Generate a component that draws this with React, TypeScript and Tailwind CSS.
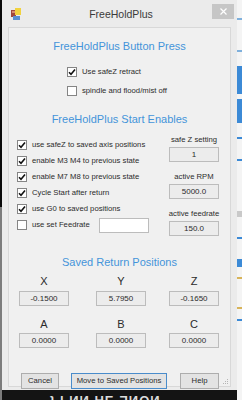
import React from 'react';

const font = { fontFamily: '"Liberation Sans", Arial, sans-serif' };

const Check: React.FC<{ on?: boolean }> = ({ on }) => (
  <div className="w-[10px] h-[10px] shrink-0 border border-[#858585] bg-white flex items-center justify-center">
    {on && (
      <svg width="8" height="8" viewBox="0 0 8 8">
        <path d="M1 4.2 L3 6.2 L7 1.5" stroke="#111" strokeWidth="1.6" fill="none" />
      </svg>
    )}
  </div>
);

const Row: React.FC<{ on?: boolean; label: string; children?: React.ReactNode }> = ({ on, label, children }) => (
  <div className="h-[16px] flex items-center">
    <Check on={on} />
    <span className="ml-[5px] text-[7.7px] text-[#2b2b2b] whitespace-nowrap">{label}</span>
    {children}
  </div>
);

const Box: React.FC<{ value: string; white?: boolean }> = ({ value, white }) => (
  <div
    className={`w-[50px] h-[15px] border border-[#bcbcbc] flex items-center justify-center text-[8px] text-[#2b2b2b] ${
      white ? 'bg-white' : 'bg-[#ececec]'
    }`}
  >
    {value}
  </div>
);

const Heading: React.FC<{ text: string; className?: string }> = ({ text, className }) => (
  <div className={`h-[14px] leading-[14px] text-center text-[11px] text-[#4494da] ${className}`}>{text}</div>
);

const Axis: React.FC<{ name: string; value: string; className?: string; gap: string }> = ({ name, value, className, gap }) => (
  <div className={`flex flex-col items-center w-[50px] ${className}`}>
    <div className="h-[14px] leading-[14px] text-[11px] text-[#2b2b2b]">{name}</div>
    <div className={gap}>
      <Box value={value} />
    </div>
  </div>
);

const Btn: React.FC<{ label: string; w: string; primary?: boolean; className?: string }> = ({ label, w, primary, className }) => (
  <div
    className={`${w} h-[16px] flex items-center justify-center text-[7.7px] text-[#2b2b2b] bg-[#e3e3e3] border ${
      primary ? 'border-[#4a8ccb]' : 'border-[#adadad]'
    } ${className}`}
  >
    {label}
  </div>
);

export default function App() {
  return (
    <div className="w-[242px] h-[400px] overflow-hidden flex bg-[#141414]" style={font}>
      {/* left edge of the desktop */}
      <div className="w-[2px] flex flex-col">
        <div className="h-[207px] bg-[#0a0a0a]" />
        <div className="flex-1 bg-[#7c7c7c]" />
      </div>

      <div className="w-[235px] flex flex-col">
        {/* dialog window */}
        <div className="h-[390px] bg-[#ebebeb] flex flex-col">
          <div className="h-[27px] flex items-start relative">
            <svg className="absolute left-[9px] top-[8px]" width="10" height="12" viewBox="0 0 10 12">
              <rect x="0" y="2" width="5" height="7" fill="#a0473b" />
              <rect x="1" y="3" width="3" height="2" fill="#d98a6e" />
              <rect x="4" y="0" width="6" height="7" fill="#f1d23e" />
              <rect x="2" y="8" width="7" height="4" fill="#5b8fd0" />
            </svg>
            <div className="w-full text-center text-[10.5px] text-[#3a3a3a] mt-[7px] leading-[14px] pl-[3px]">FreeHoldPlus</div>
            <div className="absolute right-[3px] top-[4px] w-[22px] h-[15px] bg-[#c6c6c6] flex items-center justify-center">
              <svg width="7" height="7" viewBox="0 0 7 7">
                <path d="M0.5 0.5 L6.5 6.5 M6.5 0.5 L0.5 6.5" stroke="#fff" strokeWidth="1.2" />
              </svg>
            </div>
          </div>

          {/* client area */}
          <div className="mx-[6px] h-[360px] bg-[#f0f0f0] border border-[#d8d8d8] flex flex-col relative">
            <Heading text="FreeHoldPlus Button Press" className="mt-[11px]" />
            <div className="mt-[11px] pl-[58px] flex flex-col gap-[3px]">
              <Row on label="Use safeZ retract" />
              <Row label="spindle and flood/mist off" />
            </div>

            <Heading text="FreeHoldPlus Start Enables" className="mt-[13px]" />
            <div className="mt-[8px] flex justify-between">
              <div className="pl-[8px] pt-[3px] flex flex-col">
                <Row on label="use safeZ to saved axis positions" />
                <Row on label="enable M3 M4 to previous state" />
                <Row on label="enable M7 M8 to previous state" />
                <Row on label="Cycle Start after return" />
                <Row on label="use G0 to saved positions" />
                <Row label="use set Feedrate">
                  <div className="ml-[9px]">
                    <Box value="" white />
                  </div>
                </Row>
              </div>
              <div className="mr-[11px] flex flex-col items-center w-[50px] text-[7.7px] text-[#2b2b2b]">
                <div className="h-[12px] leading-[12px] whitespace-nowrap">safe Z setting</div>
                <div className="mt-[1px]">
                  <Box value="1" />
                </div>
                <div className="mt-[9px] h-[12px] leading-[12px] whitespace-nowrap">active RPM</div>
                <div className="mt-[1px]">
                  <Box value="5000.0" />
                </div>
                <div className="mt-[9px] h-[12px] leading-[12px] whitespace-nowrap">active feedrate</div>
                <div className="mt-[1px]">
                  <Box value="150.0" />
                </div>
              </div>
            </div>

            <Heading text="Saved Return Positions" className="mt-[19px]" />
            <div className="mt-[5px] pl-[10px] flex">
              <Axis name="X" value="-0.1500" gap="mt-[3px]" />
              <Axis name="Y" value="5.7950" gap="mt-[3px]" className="ml-[27px]" />
              <Axis name="Z" value="-0.1650" gap="mt-[3px]" className="ml-[23px]" />
            </div>
            <div className="mt-[11px] pl-[10px] flex">
              <Axis name="A" value="0.0000" gap="mt-[2px]" />
              <Axis name="B" value="0.0000" gap="mt-[2px]" className="ml-[27px]" />
              <Axis name="C" value="0.0000" gap="mt-[2px]" className="ml-[23px]" />
            </div>

            <div className="mt-[25px] pl-[12px] flex">
              <Btn label="Cancel" w="w-[38px]" />
              <Btn label="Move to Saved Positions" w="w-[96px]" primary className="ml-[12px]" />
              <Btn label="Help" w="w-[39px]" className="ml-[13px]" />
            </div>

            {/* size grip */}
            <svg className="absolute right-[1px] bottom-[1px]" width="6" height="6" viewBox="0 0 6 6">
              <rect x="4" y="0" width="1" height="1" fill="#b5b5b5" />
              <rect x="2" y="2" width="1" height="1" fill="#b5b5b5" />
              <rect x="4" y="2" width="1" height="1" fill="#b5b5b5" />
              <rect x="0" y="4" width="1" height="1" fill="#b5b5b5" />
              <rect x="2" y="4" width="1" height="1" fill="#b5b5b5" />
              <rect x="4" y="4" width="1" height="1" fill="#b5b5b5" />
            </svg>
          </div>
        </div>

        {/* desktop below the window */}
        <div className="flex-1 pl-[48px] pt-[4px] overflow-hidden">
          <div className="text-[13px] leading-[13px] text-[#dcdcdc] tracking-[1px] font-bold">ʇ l ИИ HE ƎИOИ</div>
        </div>
      </div>

      {/* right edge: page behind the dialog */}
      <div className="w-[5px] bg-[#f4f4f4] flex flex-col">
        <div className="mt-[18px] h-[2px] bg-[#7fb0dc]" />
        <div className="mt-[30px] h-[2px] bg-[#7fb0dc]" />
        <div className="mt-[14px] h-[28px] bg-[#3c8ad6]" />
        <div className="mt-[5px] h-[24px] bg-[#3c8ad6]" />
        <div className="mt-[14px] h-[2px] bg-[#3c8ad6]" />
        <div className="mt-[20px] h-[2px] bg-[#3c8ad6]" />
        <div className="mt-[50px] h-[6px] bg-[#c9c9c9]" />
        <div className="mt-[20px] h-[2px] bg-[#3c8ad6]" />
        <div className="mt-[20px] h-[8px] bg-[#3c8ad6]" />
        <div className="mt-[10px] h-[2px] bg-[#d8b45a]" />
        <div className="mt-[28px] h-[2px] bg-[#d8b45a]" />
        <div className="mt-[10px] h-[2px] bg-[#3c8ad6]" />
      </div>
    </div>
  );
}
